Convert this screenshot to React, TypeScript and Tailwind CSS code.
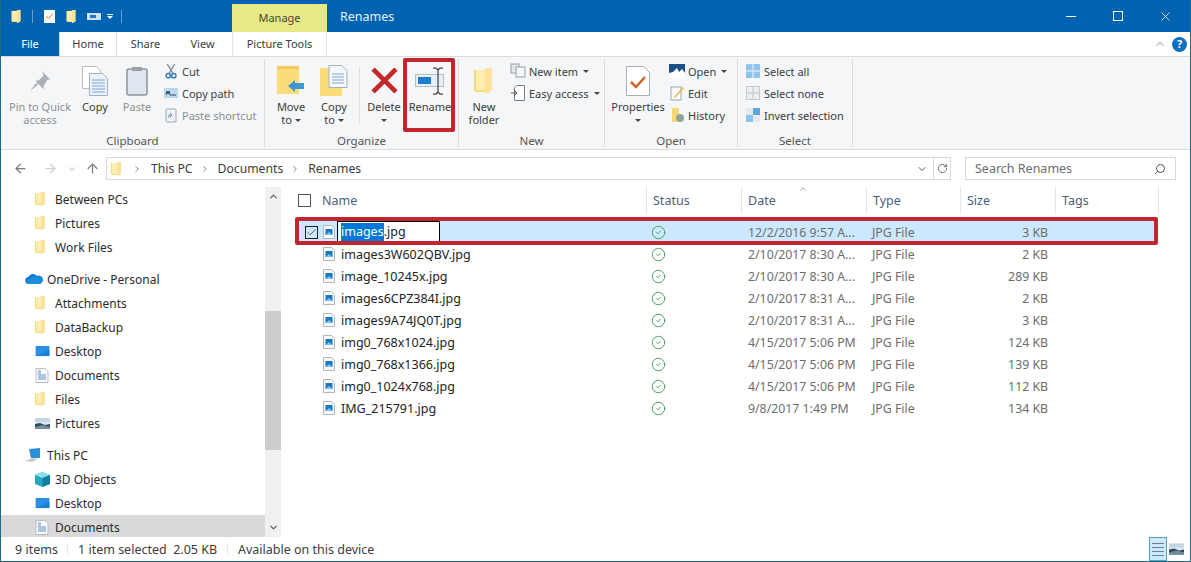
import { ReactNode } from "react";
import { ArrowLeft, ArrowRight, ArrowUp, Check, ChevronDown, ChevronUp, ChevronRight, CircleCheck, RotateCw, Search, X } from "lucide-react";

const Folder = ({ className = "w-[11px] h-[14px]" }: { className?: string }) => (
  <svg viewBox="0 0 11 14" className={className}>
    <path d="M0 1h6l1 1v11H1l-1-1z" fill="#f8d775" />
    <path d="M6 0h4v12L7 14H6z" fill="#fbe39a" />
    <path d="M1 1h5v11H1z" fill="#fdeeb0" />
  </svg>
);

const Library = () => (
  <svg viewBox="0 0 14 15" className="w-[14px] h-[15px]">
    <path d="M1 .5h9l3 3v11H1z" fill="#fafafa" stroke="#b8bcc4" />
    <path d="M3 3h3M3 5h3M3 7h8M3 9h8M3 11h8" stroke="#5f93c9" />
  </svg>
);

const Monitor = () => (
  <svg viewBox="0 0 15 12" className="w-[15px] h-[11px]">
    <rect width="15" height="11" fill="#2b8fe6" />
    <path d="M0 11 15 4v7z" fill="#1f7fd6" />
  </svg>
);

const Landscape = ({ className = "w-[15px] h-[11px]" }: { className?: string }) => (
  <svg viewBox="0 0 15 11" className={className}>
    <rect width="15" height="11" fill="#dfe6ee" />
    <rect width="15" height="4" fill="#c3d6e6" />
    <path d="M0 6 5 5l5 2 5-1v5H0z" fill="#2f4c5a" />
    <path d="M0 9 8 7l7 2v2H0z" fill="#6f8d9a" />
  </svg>
);

const Cloud = () => (
  <svg viewBox="0 0 18 12" className="w-[18px] h-[12px]">
    <path d="M4 11a3.5 3.5 0 0 1-.5-7A5 5 0 0 1 12 3a4 4 0 0 1 5 6c-.5 1.300-1.500 2-3 2z" fill="#0f78d4" />
    <path d="M4 11a2.500 2.500 0 0 1 1-5 4 4 0 0 1 7-1 3 3 0 0 1 5 4c-.5 1.300-1.500 2-3 2z" fill="#1a8fe0" />
  </svg>
);

const Pc = () => (
  <svg viewBox="0 0 18 15" className="w-[18px] h-[15px]">
    <path d="M4 1l11-1v10L6 10z" fill="#2a8fd8" />
    <path d="M0 13l7-3 6 1-6 3z" fill="#c6ccd2" />
  </svg>
);

const Cube = () => (
  <svg viewBox="0 0 15 15" className="w-[15px] h-[15px]">
    <path d="M7.500 0 15 3v9l-7.500 3L0 12V3z" fill="#25a5c4" />
    <path d="M7.500 0 15 3 7.500 6 0 3z" fill="#8be0ee" />
    <path d="M7.500 6 15 3v9l-7.500 3z" fill="#12809c" />
  </svg>
);

const ImageFile = () => (
  <svg viewBox="0 0 12 14" className="w-[12px] h-[14px] shrink-0">
    <path d="M.5.500h8l3 3v10H.5z" fill="#f7f9fb" stroke="#aeb6bf" />
    <rect x="2.500" y="4" width="7" height="6" fill="#1679c5" />
    <path d="M2.500 10 6 7l3.500 3z" fill="#7fc0ec" />
  </svg>
);

const PageIcon = ({ children }: { children: ReactNode }) => (
  <svg viewBox="0 0 16 16" className="w-[16px] h-[16px]">{children}</svg>
);

const ribbonText = "text-[11px] leading-[13px] text-[#3c3c3c]";

function BigButton({ w, icon, lines, muted, caret, className = "" }: { w: string; icon: ReactNode; lines: string[]; muted?: boolean; caret?: boolean; className?: string }) {
  return (
    <div className={`${w} ${className} shrink-0 flex flex-col items-center`}>
      <div className="h-[39px] w-full flex items-center justify-center">{icon}</div>
      <div className={`${ribbonText} ${muted ? "text-[#8b8f94]" : ""} text-center whitespace-nowrap`}>
        {lines.map((l, i) => (
          <div key={i}>
            {l}
            {caret && i === lines.length - 1 && lines.length > 1 ? <span className="inline-block ml-[3px] mb-[2px] border-x-[3px] border-t-[3px] border-x-transparent border-t-[#444]" /> : null}
          </div>
        ))}
        {caret && lines.length === 1 ? <div><span className="inline-block mb-[2px] border-x-[3px] border-t-[3px] border-x-transparent border-t-[#444]" /></div> : null}
      </div>
    </div>
  );
}

function SmallButton({ icon, label, muted, caret }: { icon: ReactNode; label: string; muted?: boolean; caret?: boolean }) {
  return (
    <div className="h-[22px] flex items-center gap-[3px]">
      <div className="w-[16px] flex justify-center">{icon}</div>
      <span className={`${ribbonText} ${muted ? "text-[#8b8f94]" : ""} whitespace-nowrap`}>{label}</span>
      {caret ? <span className="ml-[2px] border-x-[3px] border-t-[3px] border-x-transparent border-t-[#444]" /> : null}
    </div>
  );
}

function Group({ w, label, children }: { w: string; label: string; children: ReactNode }) {
  return (
    <div className={`${w} shrink-0 flex flex-col border-r border-[#dcdddf] my-[2px]`}>
      <div className="flex h-[75px] pt-[2px]">{children}</div>
      <div className="text-[11.500px] leading-[13px] text-[#555] text-center mt-[5px]">{label}</div>
    </div>
  );
}

const sideItems = [
  { label: "Between PCs", icon: <Folder /> },
  { label: "Pictures", icon: <Folder /> },
  { label: "Work Files", icon: <Folder /> },
  { label: "OneDrive - Personal", icon: <Cloud />, head: true },
  { label: "Attachments", icon: <Folder /> },
  { label: "DataBackup", icon: <Folder /> },
  { label: "Desktop", icon: <Monitor /> },
  { label: "Documents", icon: <Library /> },
  { label: "Files", icon: <Folder /> },
  { label: "Pictures", icon: <Landscape /> },
  { label: "This PC", icon: <Pc />, head: true },
  { label: "3D Objects", icon: <Cube /> },
  { label: "Desktop", icon: <Monitor /> },
  { label: "Documents", icon: <Library />, active: true },
];

const files = [
  { name: "images.jpg", date: "12/2/2016 9:57 A...", size: "3 KB", editing: true },
  { name: "images3W602QBV.jpg", date: "2/10/2017 8:30 A...", size: "2 KB" },
  { name: "image_10245x.jpg", date: "2/10/2017 8:30 A...", size: "289 KB" },
  { name: "images6CPZ384I.jpg", date: "2/10/2017 8:31 A...", size: "2 KB" },
  { name: "images9A74JQ0T.jpg", date: "2/10/2017 8:31 A...", size: "3 KB" },
  { name: "img0_768x1024.jpg", date: "4/15/2017 5:06 PM", size: "124 KB" },
  { name: "img0_768x1366.jpg", date: "4/15/2017 5:06 PM", size: "139 KB" },
  { name: "img0_1024x768.jpg", date: "4/15/2017 5:06 PM", size: "112 KB" },
  { name: "IMG_215791.jpg", date: "9/8/2017 1:49 PM", size: "134 KB" },
];

const headers = [
  { label: "Status", w: "w-[95px]" },
  { label: "Date", w: "w-[125px]" },
  { label: "Type", w: "w-[94px]" },
  { label: "Size", w: "w-[95px]" },
  { label: "Tags", w: "w-[103px]" },
];

export default function App() {
  return (
    <div className="relative w-[1191px] h-[562px] overflow-hidden bg-white flex flex-col border-x border-b border-[#1d6b84] font-['Noto_Sans',sans-serif] text-[12px]">
      {/* title bar */}
      <div className="h-[32px] shrink-0 bg-[#0063b1] flex items-end text-white">
        <div className="w-[231px] h-[32px] flex items-center">
          <div className="ml-[10px]"><Folder className="w-[11px] h-[13px]" /></div>
          <div className="ml-[10px] w-px h-[13px] bg-[#6f9fca]" />
          <div className="ml-[11px] w-[11px] h-[13px] bg-[#fbfbf6] flex items-center justify-center"><Check size={9} color="#d2622a" strokeWidth={2.5} /></div>
          <div className="ml-[11px]"><Folder className="w-[11px] h-[13px]" /></div>
          <div className="ml-[10px] w-[14px] h-[7px] bg-[#cfe0ee] flex items-center pl-[3px]"><div className="w-[6px] h-[3px] bg-[#1e78c8]" /></div>
          <div className="ml-[6px] flex flex-col items-center gap-[1px]">
            <div className="w-[6px] h-px bg-white" />
            <div className="border-x-[3px] border-t-[3px] border-x-transparent border-t-white" />
          </div>
          <div className="ml-[8px] w-px h-[13px] bg-[#6f9fca]" />
        </div>
        <div className="w-[95px] h-[28px] bg-[#e6e986] text-[11px] text-[#3f4a33] flex items-center justify-center">Manage</div>
        <div className="ml-[13px] self-center pt-[2px] text-[12.500px] text-[#e8f1f8]">Renames</div>
        <div className="ml-auto self-center flex items-center">
          <div className="w-[47px] flex justify-center"><div className="w-[10px] h-px bg-white" /></div>
          <div className="w-[47px] flex justify-center"><div className="w-[10px] h-[10px] border border-white" /></div>
          <div className="w-[48px] flex justify-center mr-[1px]"><X size={15} strokeWidth={1.25} /></div>
        </div>
      </div>

      {/* tabs */}
      <div className="h-[24px] shrink-0 flex items-stretch bg-white text-[11px] text-[#3c3c3c]">
        <div className="w-[58px] bg-[#0063b1] text-white flex items-center justify-center">File</div>
        <div className="w-[58px] border-x border-[#dadbdc] flex items-center justify-center">Home</div>
        <div className="w-[57px] flex items-center justify-center">Share</div>
        <div className="w-[57px] flex items-center justify-center">View</div>
        <div className="w-[95px] ml-[1px] border-x border-[#e4e5e6] flex items-center justify-center">Picture Tools</div>
        <div className="ml-auto flex items-center pr-[3px] gap-[5px]">
          <ChevronUp size={14} color="#c4c4c4" />
          <div className="w-[15px] h-[15px] rounded-full bg-[#0e70c0] text-white text-[11px] font-bold flex items-center justify-center">?</div>
        </div>
      </div>

      {/* ribbon */}
      <div className="h-[94px] shrink-0 bg-[#f5f6f7] border-y border-[#dadbdc] flex">
        <Group w="w-[264px]" label="Clipboard">
          <BigButton w="w-[62px]" className="ml-[8px]" muted lines={["Pin to Quick", "access"]} icon={
            <svg viewBox="0 0 24 24" className="w-[22px] h-[22px]"><path d="M14 1l9 9-3 1-4 6 0 4-9-9 4-1 5-5z" fill="#a9b0b8" /><path d="M8 14l-7 9 9-7z" fill="#a9b0b8" /></svg>
          } />
          <BigButton w="w-[48px]" lines={["Copy"]} icon={
            <svg viewBox="0 0 26 30" className="w-[26px] h-[30px]"><path d="M.5.500h14l4 4v18H.5z" fill="#fff" stroke="#b9bdc3" /><path d="M7.500 7.500h13l5 5v17h-18z" fill="#eaf1fa" stroke="#a8b0ba" /><path d="M10 14h13M10 17h13M10 20h13M10 23h13M10 26h13" stroke="#7fa7db" /></svg>
          } />
          <BigButton w="w-[36px]" muted lines={["Paste"]} icon={
            <svg viewBox="0 0 22 30" className="w-[22px] h-[30px]"><rect x="1" y="3" width="20" height="26" rx="2" fill="#dfe6f0" stroke="#8e949b" strokeWidth="1.500" /><rect x="6" y="1" width="10" height="4" fill="#9aa0a6" /></svg>
          } />
          <div className="ml-[8px] -mt-[1px] flex flex-col">
            <SmallButton label="Cut" icon={
              <svg viewBox="0 0 12 16" className="w-[12px] h-[15px]"><path d="M2 0l6 10M10 0L4 10" stroke="#8a9098" strokeWidth="1.500" /><circle cx="3" cy="12.500" r="2.300" fill="none" stroke="#2a78b8" strokeWidth="1.500" /><circle cx="9" cy="12.500" r="2.300" fill="none" stroke="#2a78b8" strokeWidth="1.500" /></svg>
            } />
            <SmallButton label="Copy path" icon={
              <PageIcon><rect x="1" y="3" width="14" height="10" fill="#bcd8f0" /><path d="M3 10l1-4 1 3 1-3 1 4h1l2 0h3" stroke="#2d4f70" fill="none" /></PageIcon>
            } />
            <SmallButton muted label="Paste shortcut" icon={
              <PageIcon><rect x="3" y="2" width="10" height="13" rx="1" fill="#eef2f7" stroke="#a0a6ad" /><path d="M6 11V8h3M7 6l2 2-2 2" stroke="#6a8fb5" fill="none" /></PageIcon>
            } />
          </div>
        </Group>

        <Group w="w-[194px]" label="Organize">
          <BigButton w="w-[44px]" className="ml-[4px]" lines={["Move", "to"]} caret icon={
            <svg viewBox="0 0 28 30" className="w-[28px] h-[30px]"><path d="M0 0h22v28H0z" fill="#fbdc7c" /><path d="M0 0h22v3H0z" fill="#f4c95a" /><path d="M11 20l7-6v3h9v6h-9v3z" fill="#3f94d2" /></svg>
          } />
          <BigButton w="w-[42px]" lines={["Copy", "to"]} caret icon={
            <svg viewBox="0 0 28 32" className="w-[28px] h-[32px]"><path d="M0 3h22v28H0z" fill="#fbdc7c" /><path d="M9 .500h13l5 5v17H9z" fill="#f4f7fb" stroke="#a8b0ba" /><path d="M12 9h12M12 12h12M12 15h12M12 18h12" stroke="#7fa7db" /></svg>
          } />
          <div className="w-px h-[56px] mt-[6px] mx-[4px] bg-[#e0e1e3]" />
          <BigButton w="w-[40px]" lines={["Delete"]} caret icon={
            <svg viewBox="0 0 26 26" className="w-[27px] h-[27px]"><path d="M2 2l22 22M24 2L2 24" stroke="#c5282a" strokeWidth="4.500" /></svg>
          } />
          <BigButton w="w-[48px]" className="ml-[2px]" lines={["Rename"]} icon={
            <svg viewBox="0 0 30 28" className="w-[30px] h-[28px]"><rect x=".500" y="7.500" width="28" height="12" fill="#e6eef6" stroke="#b4bcc4" /><rect x="3" y="10" width="13" height="7" fill="#1e7fd0" /><path d="M18 1h3l2 2 2-2h3M23 3v22M18 27h3l2-2 2 2h3" stroke="#444" strokeWidth="1.250" fill="none" /></svg>
          } />
        </Group>

        <Group w="w-[146px]" label="New">
          <BigButton w="w-[42px]" className="ml-[4px]" lines={["New", "folder"]} icon={<Folder className="w-[20px] h-[28px]" />} />
          <div className="ml-[5px] -mt-[1px] flex flex-col">
            <SmallButton label="New item" caret icon={
              <PageIcon><rect x="1" y="1" width="8" height="9" fill="#e3e7ec" stroke="#9aa0a8" /><rect x="6" y="4" width="9" height="10" fill="#f4f6f9" stroke="#9aa0a8" /></PageIcon>
            } />
            <SmallButton label="Easy access" caret icon={
              <PageIcon><path d="M6.500.500h8v15h-10V3z" fill="#fff" stroke="#7a8087" /><path d="M1 8h6M4 5l3 3-3 3" stroke="#555" fill="none" /></PageIcon>
            } />
          </div>
        </Group>

        <Group w="w-[133px]" label="Open">
          <BigButton w="w-[54px]" className="ml-[6px]" lines={["Properties"]} caret icon={
            <svg viewBox="0 0 24 30" className="w-[24px] h-[30px]"><path d="M.5.500h17l6 6v23H.5z" fill="#fff" stroke="#aab0b7" /><path d="M5 16l5 5 9-10" stroke="#d2622a" strokeWidth="2.500" fill="none" /></svg>
          } />
          <div className="ml-[4px] -mt-[1px] flex flex-col">
            <SmallButton label="Open" caret icon={
              <PageIcon><rect y="1" width="16" height="14" fill="#fff" /><path d="M0 1h16v9l-3-4-3 3-2-4-4 4-4 1z" fill="#1c4f87" /></PageIcon>
            } />
            <SmallButton label="Edit" icon={
              <PageIcon><rect x="2" y="2" width="10" height="13" fill="#fbfbfb" stroke="#a0a6ad" /><path d="M5 12l9-10 1 1-9 10z" fill="#e8b33c" /></PageIcon>
            } />
            <SmallButton label="History" icon={
              <PageIcon><path d="M3 1h7v14H3z" fill="#f8d775" /><circle cx="11" cy="11" r="4" fill="#8fa598" /></PageIcon>
            } />
          </div>
        </Group>

        <Group w="w-[115px]" label="Select">
          <div className="ml-[7px] -mt-[1px] flex flex-col">
            <SmallButton label="Select all" icon={
              <PageIcon><rect x="1" y="1" width="14" height="14" fill="#8ec4ee" /><path d="M8 1v14M1 8h14" stroke="#eef5fb" /></PageIcon>
            } />
            <SmallButton label="Select none" icon={
              <PageIcon><rect x="1.500" y="1.500" width="13" height="13" fill="#eceef0" stroke="#c4c8cc" /><path d="M8 1v14M1 8h14" stroke="#c4c8cc" /></PageIcon>
            } />
            <SmallButton label="Invert selection" icon={
              <PageIcon><rect x="1" y="1" width="14" height="14" fill="#e6ebf0" /><rect x="8" y="1" width="7" height="7" fill="#5fa6e0" /><rect x="1" y="8" width="7" height="7" fill="#8ec4ee" /></PageIcon>
            } />
          </div>
        </Group>
      </div>

      {/* address row */}
      <div className="h-[34px] shrink-0 pt-[3px] flex items-center text-[12.200px] text-[#3c3c3c]">
        <ArrowLeft size={15} color="#7a7a7a" className="ml-[12px]" />
        <ArrowRight size={15} color="#cfcfcf" className="ml-[15px]" />
        <ChevronDown size={10} color="#9a9a9a" className="ml-[9px]" />
        <ArrowUp size={15} color="#7a7a7a" className="ml-[8px]" />
        <div className="ml-[6px] w-[845px] h-[23px] border border-[#d9d9d9] flex items-center">
          <div className="ml-[4px]"><Folder className="w-[11px] h-[14px]" /></div>
          <ChevronRight size={10} color="#777" className="ml-[10px]" />
          <span className="ml-[9px] pt-[2px]">This PC</span>
          <ChevronRight size={10} color="#777" className="ml-[7px]" />
          <span className="ml-[8px] pt-[2px]">Documents</span>
          <ChevronRight size={10} color="#777" className="ml-[7px]" />
          <span className="ml-[8px] pt-[2px]">Renames</span>
          <div className="ml-auto flex items-center h-full">
            <ChevronDown size={12} color="#555" className="mr-[5px]" />
            <div className="w-[17px] h-full border-l border-[#d9d9d9] flex items-center justify-center">
              <RotateCw size={11} color="#666" />
            </div>
          </div>
        </div>
        <div className="ml-[14px] w-[211px] h-[23px] border border-[#d9d9d9] flex items-center justify-between pl-[9px] pr-[9px] text-[12.500px] text-[#6d6d6d]">
          <span className="pt-[2px]">Search Renames</span>
          <Search size={12} color="#555" className="-scale-x-100" />
        </div>
      </div>

      {/* main */}
      <div className="flex-1 min-h-0 flex">
        <div className="w-[264px] shrink-0 pt-[3px] overflow-hidden text-[#2b2b2b]">
          {sideItems.map((it, i) => (
            <div key={i} className={`h-[24px] flex items-center ${it.head ? "mt-[8px] pl-[24px]" : "pl-[34px]"} ${it.active ? "bg-[#d9d9d9]" : ""}`}>
              <div className={`${it.head ? "w-[22px]" : "w-[20px]"} flex`}>{it.icon}</div>
              <span className="pt-[2px]">{it.label}</span>
            </div>
          ))}
        </div>

        <div className="w-[16px] shrink-0 mt-[3px] bg-[#f0f0f0] flex flex-col items-center">
          <ChevronUp size={11} color="#555" strokeWidth={2.5} className="mt-[4px]" />
          <div className="w-full h-[139px] mt-[109px] bg-[#cdcdcd]" />
          <ChevronDown size={11} color="#555" strokeWidth={2.5} className="mt-auto mb-[4px]" />
        </div>

        <div className="flex-1 min-w-0 pl-[3px]">
          <div className="h-[37px] flex pb-[7px] pt-[3px] text-[12.500px] text-[#4c607a]">
            <div className="w-[363px] border-r border-[#e5e5e5] flex items-center">
              <div className="ml-[14px] w-[13px] h-[13px] border border-[#555]" />
              <span className="ml-[11px] pt-[2px]">Name</span>
            </div>
            {headers.map((h) => (
              <div key={h.label} className={`${h.w} pt-[2px] border-r border-[#e5e5e5] flex items-center pl-[6px]`}>{h.label}</div>
            ))}
          </div>

          {files.map((f) => (
            <div key={f.name} className={`ml-[15px] w-[855px] h-[22px] flex items-center text-[12.300px] text-[#6d6d6d] ${f.editing ? "bg-[#cce8ff]" : ""}`}>
              <div className="w-[347px] flex items-center pl-[6px] text-[12.500px]">
                <div className="w-[13px] h-[13px] mr-[5px] shrink-0 flex items-center justify-center">
                  {f.editing ? (
                    <div className="w-[13px] h-[13px] border border-[#222] flex items-center justify-center">
                      <Check size={11} color="#222" strokeWidth={1.5} />
                    </div>
                  ) : null}
                </div>
                <ImageFile />
                {f.editing ? (
                  <div className="ml-[2px] w-[103px] h-[22px] bg-white border border-black pl-[3px] flex items-center text-[#222]">
                    <span className="bg-[#0078d7] text-white">images</span>.jpg
                  </div>
                ) : (
                  <span className="ml-[6px] pt-[2px] text-[#222]">{f.name}</span>
                )}
              </div>
              <div className="w-[95px] pl-[5px]"><CircleCheck size={15} color="#4a9b5e" strokeWidth={1.5} /></div>
              <div className="w-[125px] pl-[7px] pt-[2px]">{f.date}</div>
              <div className="w-[94px] pl-[6px] pt-[2px]">JPG File</div>
              <div className="w-[95px] pr-[7px] pt-[2px] text-right">{f.size}</div>
            </div>
          ))}
        </div>
      </div>

      {/* status bar */}
      <div className="h-[24px] shrink-0 flex items-center text-[12.500px] text-[#3c3c3c]">
        <span className="ml-[14px] w-[52px] pt-[2px]">9 items</span>
        <div className="w-px h-[12px] bg-[#e8e8e8]" />
        <span className="ml-[10px] w-[149px] pt-[2px] whitespace-nowrap">1 item selected&nbsp;&nbsp;2.05 KB</span>
        <div className="w-px h-[12px] bg-[#e8e8e8]" />
        <span className="ml-[10px] pt-[2px]">Available on this device</span>
        <div className="ml-auto mr-[6px] flex items-center h-full gap-[2px]">
          <div className="w-[18px] h-full bg-[#cce8ff] border border-[#5b9fb5] flex flex-col justify-center gap-[3px] px-[2px]">
            <div className="h-px bg-[#6d7f8c]" />
            <div className="h-px bg-[#6d7f8c]" />
            <div className="h-px bg-[#6d7f8c]" />
            <div className="h-px bg-[#6d7f8c]" />
          </div>
          <Landscape className="w-[15px] h-[12px]" />
        </div>
      </div>

      {/* red callouts */}
      <div className="absolute left-[402px] top-[58px] w-[52px] h-[74px] border-[4px] border-[#c0272d] rounded-[2px]" />
      <div className="absolute left-[294px] top-[217px] w-[863px] h-[28px] border-[4px] border-[#c0272d] rounded-[2px]" />
      <ChevronUp size={10} color="#888" className="absolute left-[797px] top-[184px]" />
    </div>
  );
}
